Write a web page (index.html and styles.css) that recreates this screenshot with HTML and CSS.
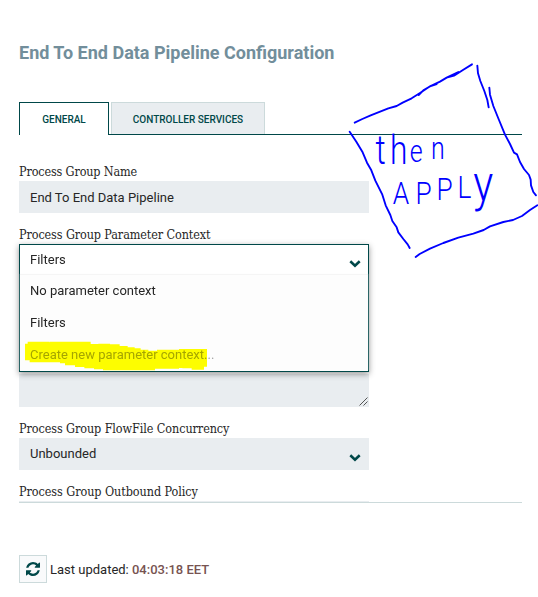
FILE: index.html
```html
<!DOCTYPE html>
<html lang="en">
<head>
<meta charset="utf-8">
<title>Process Group Configuration</title>
<link rel="stylesheet" href="styles.css">
</head>
<body>
<main class="page">
  <h1 class="title">End To End Data Pipeline Configuration</h1>
  <nav class="tabs">
    <div class="tab tab-selected">GENERAL</div>
    <div class="tab">CONTROLLER SERVICES</div>
  </nav>
  <section class="settings">
    <div class="setting">
      <div class="label l-name"><span>Process Group Name</span></div>
      <div class="field">End To End Data Pipeline</div>
    </div>
    <div class="setting">
      <div class="label l-context"><span>Process Group Parameter Context</span></div>
      <div class="field combo">
        <div class="menu">
          <div class="menu-value">Filters
            <svg class="chevron" viewBox="0 0 12 8"><path d="M1.3 1.3 6 5.7 10.7 1.3"/></svg>
          </div>
          <div class="options">
            <div class="option">No parameter context</div>
            <div class="option">Filters</div>
            <div class="option option-muted">Create new parameter context...
              <svg class="marker" viewBox="0 0 546 90"><path d="M0 8H8V2H74V4H75V2H197V9H220V8H255V10H284V15H308V19H329V22H347V26H370V29H396V26H462V24H546V77H537V86H500V82H472V81H462V83H390V88H234V85H207V82H178V78H150V73H120V67H105V64H14V58H0Z"/></svg>
            </div>
          </div>
        </div>
      </div>
      <div class="comments">
        <svg class="grip" viewBox="0 0 9 9"><path d="M.5 8.5 8.5.5M4.5 8.5 8.5 4.5"/></svg>
      </div>
    </div>
    <div class="setting">
      <div class="label l-flow"><span>Process Group FlowFile Concurrency</span></div>
      <div class="field field-select">Unbounded
        <svg class="chevron" viewBox="0 0 12 8"><path d="M1.3 1.3 6 5.7 10.7 1.3"/></svg>
      </div>
    </div>
    <div class="setting">
      <div class="label l-policy"><span>Process Group Outbound Policy</span></div>
      <div class="field field-clipped"></div>
    </div>
  </section>
  <footer class="footer">
    <div class="refresh">
      <svg viewBox="0 0 1536 1536"><path d="M1511 928q0 5-1 7-64 268-268 434.500T764 1536q-146 0-282.500-55T238 1324l-129 129q-19 19-45 19t-45-19-19-45V960q0-26 19-45t45-19h448q26 0 45 19t19 45-19 45l-137 137q71 66 161 102t187 36q134 0 250-65t186-179q11-17 53-117 8-23 30-23h192q13 0 22.500 9.500t9.500 22.500zm25-800v448q0 26-19 45t-45 19h-448q-26 0-45-19t-19-45 19-45l138-138Q969 256 768 256q-134 0-250 65T332 500q-11 17-53 117-8 23-30 23H50q-13 0-22.500-9.500T18 608v-7q65-268 270-434.500T768 0q146 0 284 55.500T1297 212l130-129q19-19 45-19t45 19 19 45z"/></svg>
    </div>
    <div class="updated">Last updated: <span class="time">04:03:18 EET</span></div>
  </footer>
</main>
<svg class="note" viewBox="0 0 594 630">
  <path d="M44 203 67 192 92 181 145 160 170 153 188 143 215 130 240 114 270 94 300 80 320 68 342 62 370 44 396 28M236 120 250 106 272 93 290 87M320 68 355 51"/>
  <path d="M412 32 414 55 421 78 433 108 442 135 446 157M448 98 450 119 460 153 477 195 495 239 510 267 522 293 531 298 540 321 552 342 567 360 572 374 573 391 580 411 588 421"/>
  <path d="M29 230 49 260 67 290 81 323 94 346 106 377 127 419 137 451 151 480 157 498 170 517 175 532 190 552 203 568 209 579M227 606 239 597 270 581 310 564 355 548 400 536 431 525 450 514 490 501 519 495 546 483 570 465 592 451"/>
  <text transform="scale(.78 1)"><tspan class="ink-tall" x="137 192" y="328 328">th</tspan><tspan class="ink-low" x="268 350" y="321 311">en</tspan></text>
  <text transform="scale(.84 1)"><tspan class="ink-caps" x="188 270 345 420" y="448 448 436 430">APPL</tspan><tspan class="ink-tail" x="476" y="437">y</tspan></text>
</svg>
</body>
</html>
```

FILE: styles.css
```css
* { box-sizing: border-box; }
body { margin: 0; background: #fff; color: #262626; font: 13px/16px Roboto, sans-serif; }
.page { height: 597px; padding: 42px 16px 0 19px; overflow: hidden; }
.title { margin: 0; height: 60px; font-size: 18px; line-height: 22px; font-weight: 700; color: #728e9b; white-space: nowrap; }
.tabs { display: flex; gap: 2px; height: 33px; border-bottom: 1px solid #004849; }
.tab { width: 154px; height: 32px; border: 1px solid #ccdadb; border-bottom: 0; background: #e9edf0; color: #004849; font-size: 10px; font-weight: 500; line-height: 33px; text-align: center; }
.tab-selected { width: 90px; height: 33px; border-color: #004849; background: #fff; }
.settings { height: 368px; padding-top: 29px; border-bottom: 1px solid #ccdadb; overflow: visible; }
.setting { width: 350px; }
.label { height: 17px; font: 12.5px/16px "Roboto Slab", "DejaVu Serif Condensed", "DejaVu Serif", serif; font-stretch: condensed; white-space: nowrap; }
.l-name { letter-spacing: -.15px; }
.l-context { letter-spacing: -.11px; }
.l-flow { letter-spacing: -.09px; }
.l-policy { letter-spacing: -.07px; }
.field { position: relative; height: 32px; margin-bottom: 14px; padding: 0 11px; background: #e9edf0; line-height: 33px; }
.field-select { line-height: 31px; }
.combo { height: 130px; margin-bottom: 0; padding: 0; background: none; }
.menu { position: relative; z-index: 1; height: 128px; border: 1px solid #004849; background: #fff; box-shadow: 0 2px 6px rgba(0,0,0,.42); }
.menu-value { position: relative; height: 30px; padding: 0 10px; line-height: 30px; }
.options { height: 96px; background: #fdfdfd; box-shadow: 0 -1px 1px #f5f5f5; }
.option { position: relative; height: 32px; padding: 0 10px; line-height: 32px; }
.option-muted { color: #a5a5a5; }
.marker { position: absolute; left: 5px; top: 2px; width: 182px; height: 30px; fill: #ff0; mix-blend-mode: multiply; }
.chevron { position: absolute; right: 8px; top: 16px; width: 12px; height: 8px; fill: none; stroke: #004849; stroke-width: 2.6; }
.menu .chevron { right: 7px; top: 15px; }
.comments { position: relative; height: 33px; margin: 0 0 14px; background: #e9edf0; }
.grip { position: absolute; right: 1px; bottom: 1px; width: 9px; height: 9px; fill: none; stroke: #555; stroke-width: 1; }
.field-clipped { height: 1px; margin: 0; }
.footer { display: flex; align-items: center; gap: 3px; margin-top: 52px; }
.refresh { display: flex; align-items: center; justify-content: center; width: 28px; height: 28px; border: 1px solid #ccdadb; background: #f9fafb; }
.refresh svg { width: 14px; height: 14px; fill: #004849; }
.updated { padding-top: 1px; white-space: nowrap; }
.time { color: #775351; font-weight: 500; }
.note { position: absolute; left: 340px; top: 55px; width: 198px; height: 210px; overflow: hidden; }
.note path { fill: none; stroke: #00f; stroke-width: 5.6; stroke-linecap: round; stroke-linejoin: round; }
.note text { fill: #00f; font-family: Roboto, sans-serif; font-weight: 300; }
.ink-tall { font-size: 122px; }
.ink-low { font-size: 96px; }
.ink-caps { font-size: 94px; }
.ink-tail { font-size: 150px; }
```
